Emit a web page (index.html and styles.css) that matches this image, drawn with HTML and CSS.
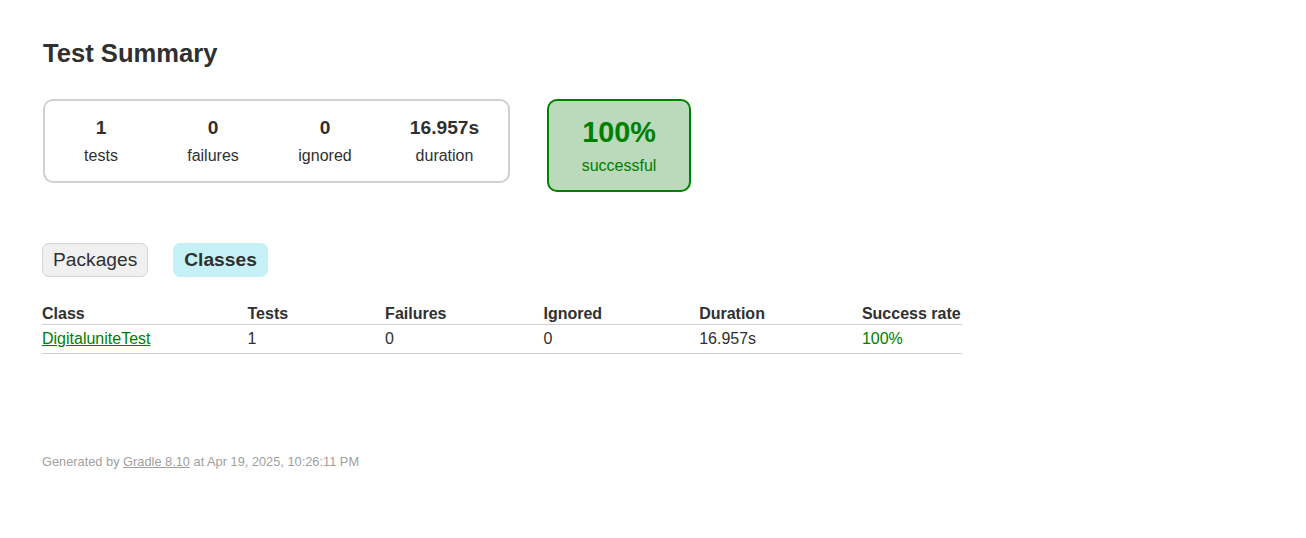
FILE: index.html
```html
<!DOCTYPE html>
<html>
<head>
<meta charset="utf-8">
<title>Test results - Test Summary</title>
<link rel="stylesheet" href="styles.css">
</head>
<body>
<div class="content">
  <h1 class="title">Test Summary</h1>
  <div class="summary">
    <div class="summary-group">
      <div class="info-box">
        <div class="counter">1</div>
        <p class="label">tests</p>
      </div>
      <div class="info-box">
        <div class="counter">0</div>
        <p class="label">failures</p>
      </div>
      <div class="info-box">
        <div class="counter">0</div>
        <p class="label">ignored</p>
      </div>
      <div class="info-box duration">
        <div class="counter">16.957s</div>
        <p class="label">duration</p>
      </div>
    </div>
    <div class="info-box success-rate">
      <div class="percent">100%</div>
      <p class="label">successful</p>
    </div>
  </div>
  <ul class="tab-links">
    <li class="tab-link"><a class="tab-anchor" href="#tab0">Packages</a></li>
    <li class="tab-link selected"><a class="tab-anchor" href="#tab1">Classes</a></li>
  </ul>
  <div class="tab">
    <table class="results">
      <thead>
        <tr>
          <th class="col">Class</th>
          <th class="col">Tests</th>
          <th class="col">Failures</th>
          <th class="col">Ignored</th>
          <th class="col">Duration</th>
          <th class="col">Success rate</th>
        </tr>
      </thead>
      <tbody>
        <tr>
          <td class="cell successful"><a class="class-link" href="#">DigitaluniteTest</a></td>
          <td class="cell">1</td>
          <td class="cell">0</td>
          <td class="cell">0</td>
          <td class="cell">16.957s</td>
          <td class="cell successful">100%</td>
        </tr>
      </tbody>
    </table>
  </div>
  <div class="footer">
    <p class="footer-text">Generated by <a class="footer-link" href="#">Gradle 8.10</a> at Apr 19, 2025, 10:26:11 PM</p>
  </div>
</div>
</body>
</html>
```

FILE: styles.css
```css
body {
  margin: 0;
  padding: 0;
  font-family: "Liberation Sans", Arial, sans-serif;
  font-size: 16px;
  color: #303030;
  background: #ffffff;
}

.content {
  padding: 22px 42px;
}

.title {
  font-size: 25.6px;
  font-weight: bold;
  margin: 17px 0 0 1px;
  white-space: nowrap;
}

.summary {
  display: flex;
  align-items: flex-start;
  margin-top: 31px;
  padding-left: 1px;
}

.summary-group {
  display: flex;
  border: solid 2px #d0d0d0;
  border-radius: 10px;
}

.info-box {
  width: 110px;
  margin: 1px;
  padding: 15px 0;
  text-align: center;
}

.info-box.duration {
  width: 125px;
}

.label {
  margin: 0;
}

.counter {
  font-size: 19.2px;
  font-weight: bold;
  margin-bottom: 8px;
}

.success-rate {
  width: 140px;
  margin: 0 0 0 37px;
  border: solid 2px #008000;
  border-radius: 10px;
  background-color: #bbd9bb;
  color: #008000;
}

.percent {
  font-size: 28.8px;
  font-weight: bold;
  margin-bottom: 8px;
}

.tab-links {
  display: flex;
  margin: 41px 0 17px;
  padding: 10px 0;
  list-style: none;
}

.tab-link {
  padding: 5px 10px;
  margin-right: 25px;
  border: solid 1px #d4d4d4;
  border-radius: 7px;
  background-color: #f0f0f0;
}

.tab-link.selected {
  background-color: #c5f0f5;
  border-color: #c5f0f5;
}

.tab-anchor {
  display: block;
  font-size: 19.2px;
  color: #303030;
  text-decoration: none;
}

.tab-link.selected .tab-anchor {
  font-weight: bold;
}

.results {
  border-collapse: collapse;
  border-bottom: solid #d0d0d0 1px;
}

.results th {
  text-align: left;
  white-space: nowrap;
  padding: 1px 1px 1px 96px;
  border-bottom: solid #d0d0d0 1px;
}

.results td {
  white-space: nowrap;
  padding: 5px 1px 5px 96px;
}

.results th:first-child,
.results td:first-child {
  padding-left: 0;
}

.successful,
.class-link {
  color: #008000;
}

.footer {
  margin-top: 100px;
  font-size: 12.8px;
  white-space: nowrap;
  color: #a0a0a0;
}

.footer-text {
  margin: 0;
}

.footer-link {
  color: #a0a0a0;
}
```
